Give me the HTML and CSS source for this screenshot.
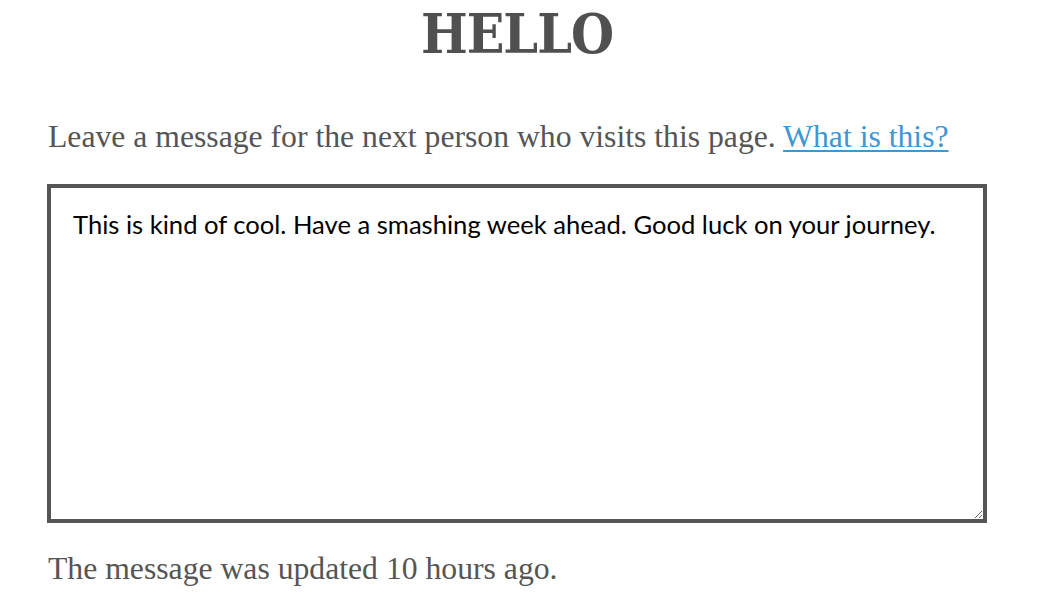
FILE: index.html
```html
<!DOCTYPE html>
<html>
<head>
<meta charset="utf-8">
<link rel="stylesheet" href="styles.css">
</head>
<body>
<main class="page">
  <h1 class="title">HELLO</h1>
  <p class="intro">Leave a message for the next person who visits this page. <a href="#" class="link">What is this?</a></p>
  <textarea class="message">This is kind of cool. Have a smashing week ahead. Good luck on your journey.</textarea>
  <p class="updated">The message was updated 10 hours ago.</p>
</main>
</body>
</html>
```
FILE: styles.css
```css
html, body {
  margin: 0;
  padding: 0;
  background: #fff;
}
.page {
  width: 940px;
  margin-left: 47px;
  display: flex;
  flex-direction: column;
}
.title {
  margin: 0;
  padding-top: 4px;
  text-align: center;
  font-family: "DejaVu Serif", serif;
  font-stretch: condensed;
  font-weight: bold;
  font-size: 55px;
  line-height: 60px;
  color: #505050;
  letter-spacing: -1px;
}
.intro {
  margin: 55px 0 0 1px;
  font-family: "Liberation Serif", serif;
  font-size: 31.7px;
  line-height: 36px;
  color: #555;
}
.link {
  color: #3d97d3;
  text-decoration: underline;
  text-decoration-thickness: 2px;
  text-underline-offset: 3px;
}
.message {
  margin-top: 29px;
  box-sizing: border-box;
  width: 940px;
  height: 339px;
  border: 4px solid #555;
  padding: 20px 22px;
  font-family: Lato, sans-serif;
  font-size: 25.6px;
  line-height: 32px;
  color: #000;
  resize: both;
  outline: none;
}
.updated {
  margin: 28px 0 0 1px;
  font-family: "Liberation Serif", serif;
  font-size: 31.7px;
  line-height: 36px;
  color: #555;
}
```
